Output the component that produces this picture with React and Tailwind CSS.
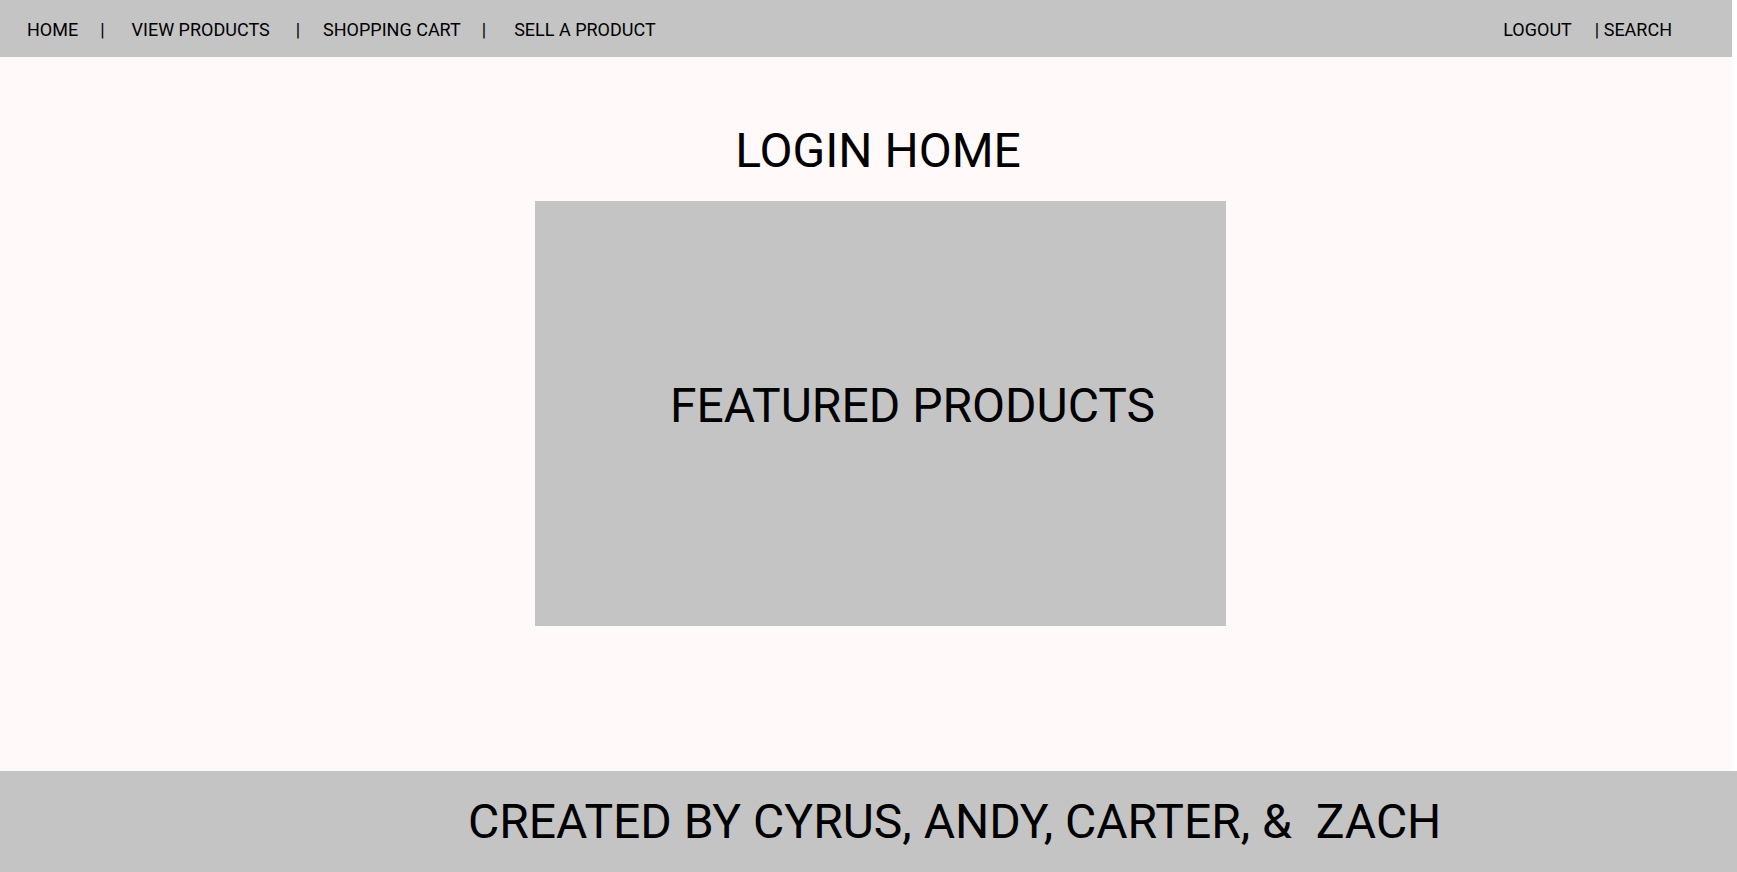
export default function App() {
  return (
    <div className="h-screen flex flex-col bg-white font-['Roboto',sans-serif] text-black">
      <div className="w-[1732px] flex-1 flex flex-col bg-[#fffaf9]">
        {/* Nav */}
        <nav className="h-[57px] shrink-0 bg-[#c4c4c4] flex items-center justify-between pt-[2px] text-[18px] leading-none">
          <div className="flex items-center pl-[27px]">
            <a href="#">HOME</a>
            <span className="ml-[22px]">|</span>
            <a href="#" className="ml-[27px]">VIEW PRODUCTS</a>
            <span className="ml-[26px]">|</span>
            <a href="#" className="ml-[23px]">SHOPPING CART</a>
            <span className="ml-[21px]">|</span>
            <a href="#" className="ml-[28px]">SELL A PRODUCT</a>
          </div>
          <div className="flex items-center pr-[60px]">
            <a href="#">LOGOUT</a>
            <a href="#" className="ml-[23px]">| SEARCH</a>
          </div>
        </nav>

        {/* Main */}
        <main className="flex-1 flex flex-col pl-[535px] pt-[70px]">
          <h1 className="w-[691px] pr-[5px] text-center text-[48px] leading-none font-normal">
            LOGIN HOME
          </h1>
          <div className="mt-[26px] w-[691px] h-[425px] bg-[#c4c4c4] pl-[135px] pt-[181px]">
            <h2 className="text-[48px] leading-none font-normal">FEATURED PRODUCTS</h2>
          </div>
        </main>
      </div>

      {/* Footer */}
      <footer className="h-[101px] shrink-0 bg-[#c4c4c4] flex items-center pl-[468px]">
        <p className="text-[48px] leading-none whitespace-pre">CREATED BY CYRUS, ANDY, CARTER, &  ZACH</p>
      </footer>
    </div>
  );
}
